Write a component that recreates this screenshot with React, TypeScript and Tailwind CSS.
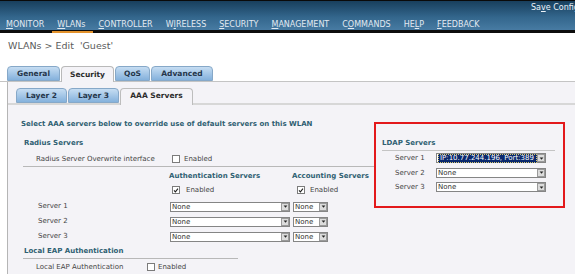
import React from 'react';

const nav = [
  { pre: '', key: 'M', post: 'ONITOR' },
  { pre: '', key: 'W', post: 'LANs' },
  { pre: '', key: 'C', post: 'ONTROLLER' },
  { pre: 'W', key: 'I', post: 'RELESS' },
  { pre: '', key: 'S', post: 'ECURITY' },
  { pre: '', key: 'M', post: 'ANAGEMENT' },
  { pre: 'C', key: 'O', post: 'MMANDS' },
  { pre: 'HE', key: 'L', post: 'P' },
  { pre: '', key: 'F', post: 'EEDBACK' },
];

const Check = ({ checked }: { checked?: boolean }) => (
  <span className="inline-flex h-[8px] w-[8px] shrink-0 items-center justify-center border border-[#7b7b7b] bg-white">
    {checked && (
      <svg viewBox="0 0 8 8" className="h-[7px] w-[7px]">
        <path d="M1.3 3.8 L3.2 5.8 L6.6 1.6" stroke="#1e1e1e" strokeWidth="1.4" fill="none" />
      </svg>
    )}
  </span>
);

const Select = ({ width, text = 'None', selected }: { width: string; text?: string; selected?: boolean }) => (
  <div className={`flex h-[10px] ${width} items-center border border-[#858585] bg-white`}>
    <span
      className={
        selected
          ? 'ml-[1px] flex-1 truncate border border-dotted border-[#d8c870] bg-[#0b2a6e] pl-[1px] text-[7px] leading-[7px] text-white'
          : 'flex-1 truncate pl-[1px] text-[7px] leading-[8px] text-[#333]'
      }
    >
      {text}
    </span>
    <span className="flex h-[8px] w-[8px] shrink-0 items-center justify-center border border-[#9a9a9a] bg-[#dcdcdc]">
      <svg viewBox="0 0 6 4" className="h-[3px] w-[5px]">
        <path d="M0.5 0.5 L5.5 0.5 L3 3.5 Z" fill="#222" />
      </svg>
    </span>
  </div>
);

const OuterTab = ({ label, width, active }: { label: string; width: string; active?: boolean }) => (
  <div
    className={`${width} flex h-[15px] items-center justify-center rounded-t-[4px] border text-[7.5px] font-bold ${
      active
        ? 'mb-[-1px] h-[16px] border-[#b9b9b9] border-b-0 bg-[#f4f3f7] text-[#2b2b2b]'
        : 'border-[#86a8c8] bg-gradient-to-b from-[#c6ddf2] to-[#84b1dc] text-[#25364a]'
    }`}
  >
    {label}
  </div>
);

export default function App() {
  return (
    <div className="h-[274px] w-[575px] overflow-hidden bg-white font-['DejaVu_Sans',sans-serif] text-[#444]">
      {/* header */}
      <div className="flex h-[33px] flex-col border-t border-[#0a0a0a] bg-gradient-to-b from-[#183f5d] via-[#33668c] to-[#4c80a8]">
        <div className="h-[19px] whitespace-nowrap pl-[531px] pt-[2px] text-[8px] leading-[10px] text-[#eef3f8]">
          Sa<span className="underline">v</span>e Configuration | Ping
        </div>
        <div className="flex h-[10px] items-center gap-[13px] whitespace-nowrap pl-[6px] text-[8px] leading-[10px] text-[#e2eaf2]">
          {nav.map((n) => (
            <span key={n.key + n.post}>
              {n.pre}
              <span className="underline">{n.key}</span>
              {n.post}
            </span>
          ))}
        </div>
        <div className="mt-auto h-[3px] bg-[#0d0d0d] pt-[1px]">
          <div className="ml-[52px] h-[2px] w-[41px] bg-[#e3922c]" />
        </div>
      </div>

      {/* page title */}
      <div className="h-[34px] pl-[8px] pt-[7px] text-[9.5px] leading-[12px] text-[#5b5b5b]">
        WLANs &gt; Edit &nbsp;&apos;Guest&apos;
      </div>

      {/* outer tabs */}
      <div className="flex h-[15px] items-end gap-[1px] border-b border-[#c4c4c4] pl-[7px]">
        <OuterTab label="General" width="w-[53px]" />
        <OuterTab label="Security" width="w-[53px]" active />
        <OuterTab label="QoS" width="w-[35px]" />
        <OuterTab label="Advanced" width="w-[62px]" />
      </div>

      <div className="ml-[7px] h-[192px] border-l border-[#b5b5b5] bg-[#f4f3f7]">
        {/* inner tabs */}
        <div className="flex h-[23px] items-end gap-[1px] border-b-2 border-[#d7d7d7] pl-[8px]">
          <OuterTab label="Layer 2" width="w-[51px]" />
          <OuterTab label="Layer 3" width="w-[51px]" />
          <div className="mb-[-2px] flex h-[17px] w-[73px] items-center justify-center rounded-t-[4px] border border-b-0 border-[#bdbdbd] bg-[#f4f3f7] pb-[2px] text-[7.5px] font-bold text-[#2b2b2b]">
            AAA Servers
          </div>
        </div>

        <div className="flex pl-[13px] pt-[12px]">
          {/* left column */}
          <div className="flex-1 text-[7px]">
            <div className="h-[14px] whitespace-nowrap font-bold leading-[14px] text-[#2f5f72]">
              Select AAA servers below to override use of default servers on this WLAN
            </div>
            <div className="mt-[5px] ml-[3px] h-[14px] font-bold leading-[14px] text-[#2f5f72]">Radius Servers</div>
            <div className="mt-[2px] flex h-[14px] items-center pl-[15px]">
              <span className="w-[136px]">Radius Server Overwrite interface</span>
              <Check />
              <span className="ml-[4px]">Enabled</span>
            </div>
            <div className="ml-[2px] h-px bg-[#b8b8b8]" />
            <div className="mt-[2px] flex h-[14px] items-center pl-[148px] font-bold text-[#2f5f72]">
              <span className="w-[123px]">Authentication Servers</span>
              <span>Accounting Servers</span>
            </div>
            <div className="flex h-[14px] items-center pl-[151px]">
              <Check checked />
              <span className="ml-[6px] w-[111px]">Enabled</span>
              <Check checked />
              <span className="ml-[5px]">Enabled</span>
            </div>
            <div className="mt-[2px]">
              {['Server 1', 'Server 2', 'Server 3'].map((s) => (
                <div key={s} className="flex h-[15px] items-center pl-[17px]">
                  <span className="w-[132px]">{s}</span>
                  <Select width="w-[120px]" />
                  <span className="w-[3px]" />
                  <Select width="w-[35px]" />
                </div>
              ))}
            </div>
            <div className="ml-[3px] h-[14px] font-bold leading-[14px] text-[#2f5f72]">Local EAP Authentication</div>
            <div className="ml-[2px] h-px w-[215px] bg-[#b8b8b8]" />
            <div className="mt-[1px] flex h-[14px] items-center pl-[15px]">
              <span className="w-[111px]">Local EAP Authentication</span>
              <Check />
              <span className="ml-[3px]">Enabled</span>
            </div>
          </div>

          {/* LDAP servers, framed in red */}
          <div className="mr-[10px] mt-[5px] h-[86px] w-[191px] border-2 border-[#e3191b] pl-[6px] pt-[13px] text-[7px]">
            <div className="h-[12px] font-bold leading-[12px] text-[#2f5f72]">LDAP Servers</div>
            <div className="mr-[8px] mt-[1px] h-px bg-[#c4c4c4]" />
            {[
              { s: 'Server 1', t: 'IP:10.77.244.196, Port:389', sel: true },
              { s: 'Server 2', t: 'None' },
              { s: 'Server 3', t: 'None' },
            ].map((r) => (
              <div key={r.s} className="flex h-[14.5px] items-center pl-[13px]">
                <span className="w-[41px]">{r.s}</span>
                <Select width="w-[110px]" text={r.t} selected={r.sel} />
              </div>
            ))}
          </div>
        </div>
      </div>
    </div>
  );
}
